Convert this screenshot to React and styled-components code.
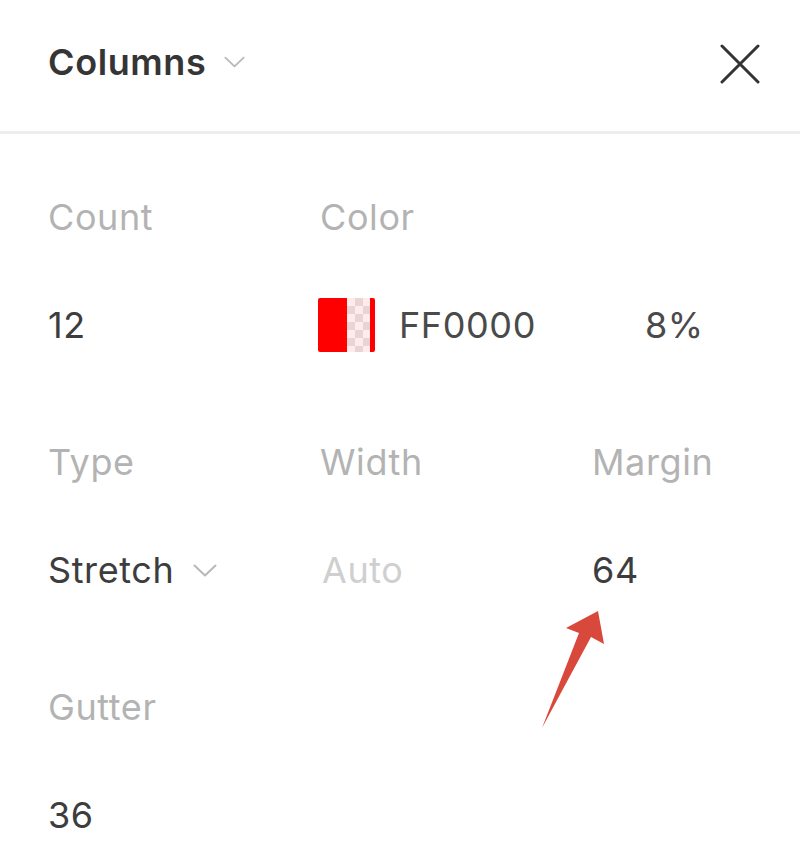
import React from "react";
import styled, { createGlobalStyle } from "styled-components";

const Global = createGlobalStyle`
  html, body { margin: 0; padding: 0; background: #ffffff; }
  body { font-family: Inter, "Noto Sans", "Liberation Sans", sans-serif; }
  * { box-sizing: border-box; }
`;

const Page = styled.div`
  position: relative;
  width: 800px;
  height: 868px;
  background: #fff;
  overflow: hidden;
`;

const Header = styled.header`
  display: flex;
  justify-content: space-between;
  align-items: flex-start;
  height: 134px;
  padding: 35px 40px 0 48px;
  border-bottom: 3px solid #ededed;
`;

const TitleGroup = styled.div`
  display: flex;
  align-items: center;
  gap: 18px;
`;

const Title = styled.span`
  font-size: 36px;
  line-height: 54px;
  font-weight: 600;
  color: #353535;
  letter-spacing: 0.6px;
`;

const CloseButton = styled.button`
  margin-top: 9px;
  padding: 0;
  border: 0;
  background: none;
  width: 40px;
  height: 40px;
  display: block;
`;

const Body = styled.div`
  padding: 56px 0 0 48px;
`;

const Section = styled.div`
  display: grid;
  grid-template-columns: 272px 272px 1fr;
  grid-template-rows: 108px 137px;
  font-size: 36px;
  letter-spacing: 0.6px;
`;

const Label = styled.div`
  line-height: 54px;
  height: 54px;
  color: #b3b3b3;
  grid-row: 1;
`;

const Value = styled.div`
  grid-row: 2;
  grid-column: ${(p) => p.$span || "auto"};
  display: flex;
  align-items: center;
  height: 54px;
  line-height: 54px;
  color: ${(p) => (p.$muted ? "#cfcfcf" : "#3d3d3d")};
  margin-left: ${(p) => p.$shift || 0}px;
`;

const Swatch = styled.div`
  display: flex;
  width: 57px;
  height: 54px;
  border-radius: 2px;
  overflow: hidden;
  flex-shrink: 0;
`;

const SwatchSolid = styled.div`
  width: 29px;
  background: #ff0000;
`;

const SwatchAlpha = styled.div`
  flex: 1;
  background:
    linear-gradient(rgba(255, 0, 0, 0.08), rgba(255, 0, 0, 0.08)),
    conic-gradient(#e6e6e6 0 25%, #ffffff 0 50%, #e6e6e6 0 75%, #ffffff 0) 0 0 / 16px 16px;
  border-right: 5px solid #ff0000;
`;

const Hex = styled.span`
  width: 246px;
  margin-left: 24px;
  color: #4a4a4a;
`;

const Percent = styled.span`
  color: #4a4a4a;
`;

const Chevron = ({ w, h }) => (
  <svg width={w} height={h} viewBox="0 0 24 13" fill="none">
    <path d="M1.5 1.5 L12 11.5 L22.5 1.5" stroke="#b8b8b8" strokeWidth="2" strokeLinecap="round" strokeLinejoin="round" />
  </svg>
);

const DropGroup = styled.div`
  display: flex;
  align-items: center;
  gap: 19px;
`;

const Annotation = styled.svg`
  position: absolute;
  left: 530px;
  top: 600px;
  width: 90px;
  height: 140px;
`;

export default function App() {
  return (
    <Page>
      <Global />
      <Header>
        <TitleGroup>
          <Title>Columns</Title>
          <Chevron w={21} h={12} />
        </TitleGroup>
        <CloseButton aria-label="Close">
          <svg width="40" height="40" viewBox="0 0 40 40" fill="none">
            <path d="M2 2 L38 38 M38 2 L2 38" stroke="#333" strokeWidth="3" strokeLinecap="round" />
          </svg>
        </CloseButton>
      </Header>
      <Body>
        <Section>
          <Label>Count</Label>
          <Label>Color</Label>
          <Value>12</Value>
          <Value $span="2 / span 2" $shift={-2}>
            <Swatch>
              <SwatchSolid />
              <SwatchAlpha />
            </Swatch>
            <Hex>FF0000</Hex>
            <Percent>8%</Percent>
          </Value>
        </Section>
        <Section>
          <Label>Type</Label>
          <Label>Width</Label>
          <Label>Margin</Label>
          <Value>
            <DropGroup>
              <span>Stretch</span>
              <Chevron w={24} h={13} />
            </DropGroup>
          </Value>
          <Value $muted $shift={2}>Auto</Value>
          <Value>64</Value>
        </Section>
        <Section>
          <Label>Gutter</Label>
          <Value>36</Value>
        </Section>
      </Body>
      <Annotation viewBox="0 0 90 140">
        <polygon points="12,128 49,33 36,28 68,11 74,44 61,37" fill="#d8483b" />
      </Annotation>
    </Page>
  );
}
